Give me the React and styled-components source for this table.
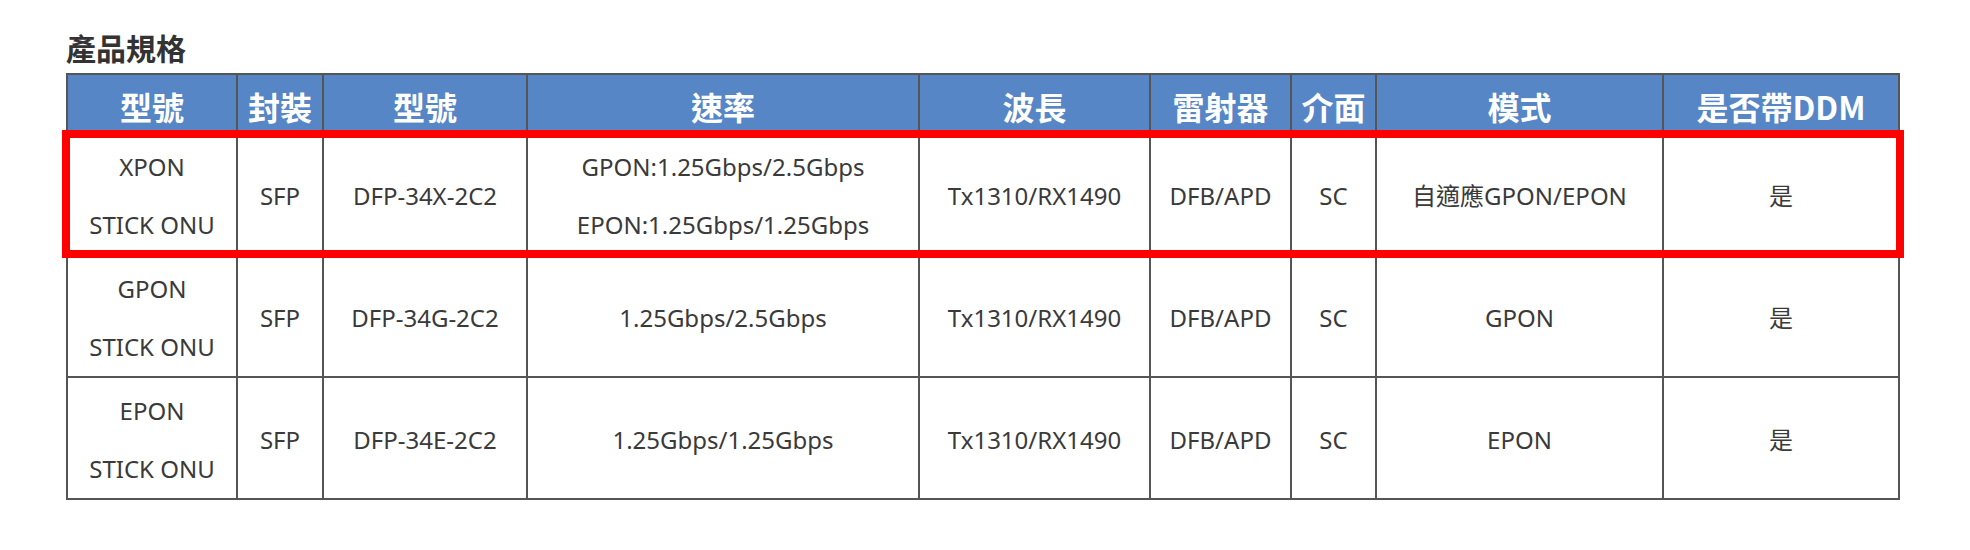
import styled, { createGlobalStyle } from "styled-components";

const GlobalStyle = createGlobalStyle`
    html, body {
        margin: 0;
        padding: 0;
        background: #ffffff;
    }
    body {
        font-family: "Noto Sans", "Noto Sans CJK TC", sans-serif;
        color: #3a3a3a;
    }
`;

const Page = styled.div`
    padding: 27px 0 0 66px;
`;

const Title = styled.h2`
    margin: 0 0 6px;
    font-family: "Noto Sans CJK TC", sans-serif;
    font-size: 30px;
    line-height: 40px;
    font-weight: 700;
    color: #333333;
`;

const TableWrap = styled.div`
    position: relative;
    width: 1832px;
`;

const SpecTable = styled.table`
    width: 1832px;
    table-layout: fixed;
    border-collapse: collapse;
    border: 2px solid #555555;
`;

const HeadCell = styled.th`
    height: 53px;
    padding: 4px 0 0;
    background: #5686c6;
    border: 2px solid #555555;
    color: #ffffff;
    font-family: "Noto Sans CJK TC", sans-serif;
    font-size: 32px;
    line-height: 40px;
    font-weight: 700;
    text-align: center;
    vertical-align: middle;
    white-space: nowrap;
`;

const Cell = styled.td`
    height: 116px;
    padding: 4px 2px 0;
    border: 2px solid #555555;
    font-size: 24px;
    line-height: 58px;
    text-align: center;
    vertical-align: middle;
    white-space: nowrap;
`;

const Line = styled.span`
    display: block;
`;

const Highlight = styled.div`
    position: absolute;
    left: -4px;
    top: 57px;
    width: 1842px;
    height: 128px;
    box-sizing: border-box;
    border: 8px solid #ff0000;
    pointer-events: none;
`;

const columns = [
    { label: "型號", width: 170 },
    { label: "封裝", width: 86 },
    { label: "型號", width: 204 },
    { label: "速率", width: 392 },
    { label: "波長", width: 231 },
    { label: "雷射器", width: 141 },
    { label: "介面", width: 85 },
    { label: "模式", width: 287 },
    { label: "是否帶DDM", width: 236 },
];

const rows = [
    [
        ["XPON", "STICK ONU"],
        ["SFP"],
        ["DFP-34X-2C2"],
        ["GPON:1.25Gbps/2.5Gbps", "EPON:1.25Gbps/1.25Gbps"],
        ["Tx1310/RX1490"],
        ["DFB/APD"],
        ["SC"],
        ["自適應GPON/EPON"],
        ["是"],
    ],
    [
        ["GPON", "STICK ONU"],
        ["SFP"],
        ["DFP-34G-2C2"],
        ["1.25Gbps/2.5Gbps"],
        ["Tx1310/RX1490"],
        ["DFB/APD"],
        ["SC"],
        ["GPON"],
        ["是"],
    ],
    [
        ["EPON", "STICK ONU"],
        ["SFP"],
        ["DFP-34E-2C2"],
        ["1.25Gbps/1.25Gbps"],
        ["Tx1310/RX1490"],
        ["DFB/APD"],
        ["SC"],
        ["EPON"],
        ["是"],
    ],
];

const App = () => (
    <Page>
        <GlobalStyle />
        <Title>產品規格</Title>
        <TableWrap>
            <SpecTable>
                <colgroup>
                    {columns.map((col, i) => (
                        <col key={i} style={{ width: `${col.width}px` }} />
                    ))}
                </colgroup>
                <thead>
                    <tr>
                        {columns.map((col, i) => (
                            <HeadCell key={i}>{col.label}</HeadCell>
                        ))}
                    </tr>
                </thead>
                <tbody>
                    {rows.map((row, r) => (
                        <tr key={r}>
                            {row.map((lines, c) => (
                                <Cell key={c}>
                                    {lines.map((text, l) => (
                                        <Line key={l}>{text}</Line>
                                    ))}
                                </Cell>
                            ))}
                        </tr>
                    ))}
                </tbody>
            </SpecTable>
            <Highlight />
        </TableWrap>
    </Page>
);

export default App;
